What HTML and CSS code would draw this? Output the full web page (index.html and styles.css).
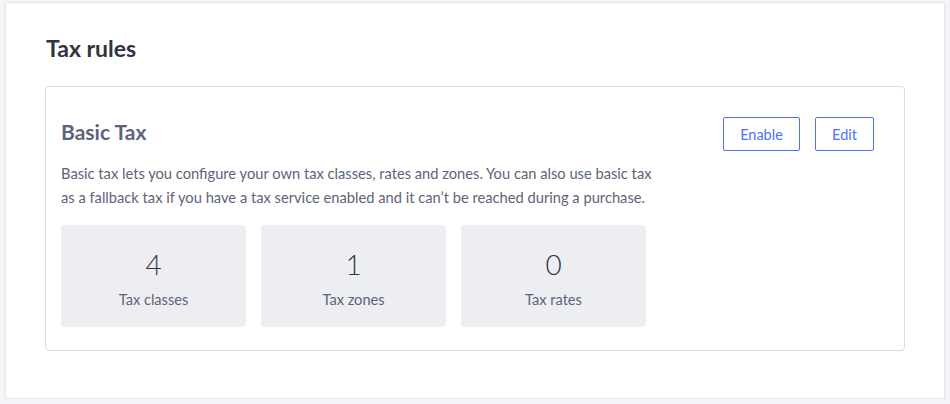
FILE: index.html
```html
<!DOCTYPE html>
<html>
<head>
<meta charset="utf-8">
<link rel="stylesheet" href="styles.css">
</head>
<body>
<div class="page">
  <section class="panel">
    <h1 class="panel-title">Tax rules</h1>
    <div class="card">
      <div class="card-head">
        <h2 class="card-title">Basic Tax</h2>
        <div class="actions">
          <button class="btn btn-enable">Enable</button>
          <button class="btn btn-edit">Edit</button>
        </div>
      </div>
      <p class="desc">Basic tax lets you configure your own tax classes, rates and zones. You can also use basic tax as a fallback tax if you have a tax service enabled and it can’t be reached during a purchase.</p>
      <div class="stats">
        <div class="stat"><div class="stat-num">4</div><div class="stat-label">Tax classes</div></div>
        <div class="stat"><div class="stat-num">1</div><div class="stat-label">Tax zones</div></div>
        <div class="stat"><div class="stat-num">0</div><div class="stat-label">Tax rates</div></div>
      </div>
    </div>
  </section>
</div>
</body>
</html>
```
FILE: styles.css
```css
html, body {
  margin: 0;
  padding: 0;
  background: #f4f5f8;
  font-family: Lato, "Liberation Sans", sans-serif;
}
.page {
  padding: 2px 5px 0 5px;
}
.panel {
  box-sizing: border-box;
  width: 940px;
  height: 397px;
  background: #ffffff;
  border: 1px solid #e6e7ec;
  box-shadow: 0 1px 2px rgba(0,0,0,0.06);
  padding: 0 39px 0 39px;
}
.panel-title {
  margin: 30px 0 0 1px;
  font-size: 23px;
  line-height: 30px;
  font-weight: 700;
  color: #313440;
  letter-spacing: 0;
}
.card {
  margin-top: 23px;
  border: 1px solid #d9dbe4;
  border-radius: 4px;
  padding: 0 15px 23px 15px;
}
.card-head {
  display: flex;
  justify-content: space-between;
  align-items: flex-start;
  padding-top: 30px;
}
.card-title {
  margin: 2px 0 0 0;
  font-size: 21px;
  line-height: 26px;
  font-weight: 700;
  color: #5e637a;
}
.actions {
  display: flex;
  gap: 15px;
  margin-right: 15px;
}
.btn {
  box-sizing: border-box;
  height: 34px;
  background: #ffffff;
  border: 1px solid #4b71fc;
  border-radius: 2px;
  color: #4b71fc;
  font-family: Lato, "Liberation Sans", sans-serif;
  font-size: 14.5px;
  padding: 0;
}
.btn-enable { width: 77px; }
.btn-edit { width: 59px; }
.desc {
  margin: 10px 0 0 0;
  width: 600px;
  font-size: 14.7px;
  line-height: 24px;
  color: #5e637a;
  letter-spacing: 0;
}
.stats {
  display: flex;
  gap: 15px;
  margin-top: 16px;
}
.stat {
  width: 185px;
  height: 102px;
  background: #edeef2;
  border-radius: 4px;
  display: flex;
  flex-direction: column;
  align-items: center;
}
.stat-num {
  margin-top: 23px;
  font-size: 28px;
  line-height: 32px;
  font-weight: 300;
  color: #313440;
}
.stat-label {
  margin-top: 10px;
  font-size: 14.6px;
  line-height: 20px;
  color: #5e637a;
}
```
